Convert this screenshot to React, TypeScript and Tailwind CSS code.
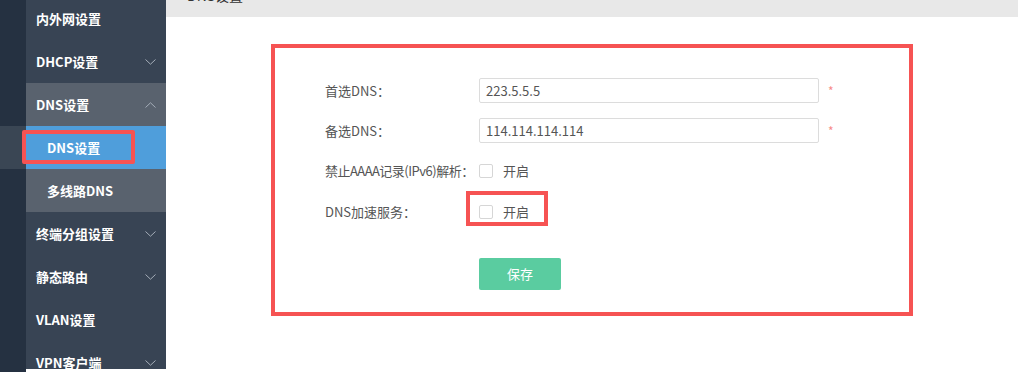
import React from "react";

const Chevron = ({ up = false }: { up?: boolean }) => (
  <svg width="11" height="6" viewBox="0 0 11 6" className="text-[#a4adb8]">
    <path
      d={up ? "M0.5 5.5 L5.5 0.8 L10.5 5.5" : "M0.5 0.5 L5.5 5.2 L10.5 0.5"}
      fill="none"
      stroke="currentColor"
      strokeWidth="1"
    />
  </svg>
);

const MenuItem = ({
  label,
  arrow,
  className = "",
}: {
  label: string;
  arrow?: "up" | "down";
  className?: string;
}) => (
  <div className={`h-[43px] flex items-center justify-between pl-[10px] pr-[10px] ${className}`}>
    <span className="text-[13px] font-bold text-white">{label}</span>
    {arrow && <Chevron up={arrow === "up"} />}
  </div>
);

const App = () => {
  return (
    <div
      className="w-[1018px] h-[372px] overflow-hidden flex bg-white"
      style={{ fontFamily: '"Microsoft YaHei", "Noto Sans CJK SC", "Noto Sans", sans-serif' }}
    >
      {/* sidebar */}
      <div className="w-[166px] h-full flex flex-col -mt-[3px] bg-[#384454]">
        {[
          { label: "内外网设置" },
          { label: "DHCP设置", arrow: "down" as const },
        ].map((it) => (
          <div key={it.label} className="flex">
            <div className="w-[26px] bg-[#253141]" />
            <div className="flex-1">
              <MenuItem label={it.label} arrow={it.arrow} />
            </div>
          </div>
        ))}
        <div className="flex">
          <div className="w-[26px] bg-[#253141]" />
          <div className="flex-1 bg-[#59626e]">
            <MenuItem label="DNS设置" arrow="up" />
          </div>
        </div>
        <div className="flex">
          <div className="w-[26px] bg-[#3a4654]" />
          <div className="flex-1 h-[43px] bg-[#4f9edb] relative flex items-center pl-[21px]">
            <span className="text-[13px] font-bold text-white">DNS设置</span>
            <div className="absolute left-[-4px] top-[4px] w-[113px] h-[34px] border-4 border-[#f65353] rounded-[2px]" />
          </div>
        </div>
        <div className="flex">
          <div className="w-[26px] bg-[#253141]" />
          <div className="flex-1 h-[43px] bg-[#59626e] flex items-center pl-[21px]">
            <span className="text-[13px] font-bold text-white">多线路DNS</span>
          </div>
        </div>
        {[
          { label: "终端分组设置", arrow: "down" as const },
          { label: "静态路由", arrow: "down" as const },
          { label: "VLAN设置" },
          { label: "VPN客户端", arrow: "down" as const },
        ].map((it) => (
          <div key={it.label} className="flex">
            <div className="w-[26px] bg-[#253141]" />
            <div className="flex-1">
              <MenuItem label={it.label} arrow={it.arrow} />
            </div>
          </div>
        ))}
      </div>

      {/* main */}
      <div className="flex-1 flex flex-col">
        <div className="h-[17px] bg-[#e8e8e8] overflow-hidden pl-[21px]">
          <div className="text-[14px] leading-[20px] -mt-[15px] text-[#333] whitespace-nowrap">DNS设置</div>
        </div>

        <div className="pl-[105px] pt-[27px]">
          <div className="w-[642px] h-[272px] border-4 border-[#f65353] pl-[50px] pt-[30px] flex flex-col">
            <div className="flex items-center h-[25px]">
              <span className="w-[154px] shrink-0 whitespace-nowrap text-[13px] text-[#555]">首选DNS：</span>
              <div className="w-[340px] h-[25px] border border-[#dcdcdc] rounded-[2px] flex items-center pl-[6px] text-[13px] text-[#555]">
                223.5.5.5
              </div>
              <span className="ml-[9px] text-[12px] text-[#f78b8b]">*</span>
            </div>
            <div className="flex items-center h-[25px] mt-[15px]">
              <span className="w-[154px] shrink-0 whitespace-nowrap text-[13px] text-[#555]">备选DNS：</span>
              <div className="w-[340px] h-[25px] border border-[#dcdcdc] rounded-[2px] flex items-center pl-[6px] text-[13px] text-[#555]">
                114.114.114.114
              </div>
              <span className="ml-[9px] text-[12px] text-[#f78b8b]">*</span>
            </div>
            <div className="flex items-center h-[26px] mt-[15px]">
              <span className="w-[154px] shrink-0 whitespace-nowrap tracking-[-0.5px] text-[13px] text-[#555]">
                禁止AAAA记录(IPv6)解析：
              </span>
              <div className="flex items-center gap-[10px]">
                <div className="w-[14px] h-[14px] border border-[#d6d6d6] rounded-[2px] bg-white" />
                <span className="text-[13px] text-[#555]">开启</span>
              </div>
            </div>
            <div className="flex items-center h-[26px] mt-[15px]">
              <span className="w-[154px] shrink-0 whitespace-nowrap text-[13px] text-[#555]">DNS加速服务：</span>
              <div className="relative flex items-center gap-[10px]">
                <div className="w-[14px] h-[14px] border border-[#d6d6d6] rounded-[2px] bg-white" />
                <span className="text-[13px] text-[#555]">开启</span>
                <div className="absolute left-[-13px] top-[-11px] w-[82px] h-[35px] border-4 border-[#f65353]" />
              </div>
            </div>
            <div className="mt-[33px] pl-[154px]">
              <button className="w-[82px] h-[32px] rounded-[2px] bg-[#5acca0] text-white text-[13px]">
                保存
              </button>
            </div>
          </div>
        </div>
      </div>
    </div>
  );
};

export default App;
